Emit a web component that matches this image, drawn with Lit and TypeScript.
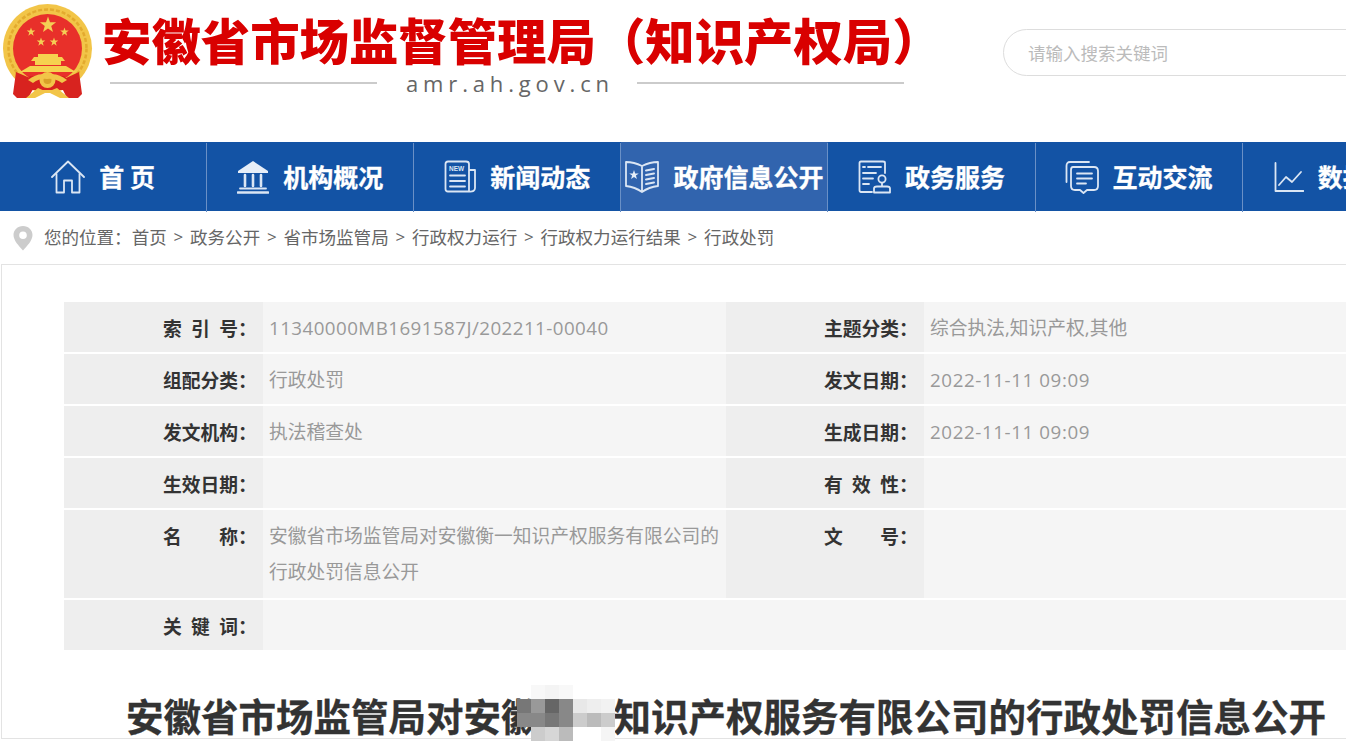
import { LitElement, html, css, svg } from "lit";
import { customElement } from "lit/decorators.js";

const star = (cx: number, cy: number, r: number) => {
  const pts: string[] = [];
  for (let i = 0; i < 10; i++) {
    const rad = i % 2 === 0 ? r : r * 0.4;
    const a = -Math.PI / 2 + (i * Math.PI) / 5;
    pts.push(`${(cx + rad * Math.cos(a)).toFixed(2)},${(cy + rad * Math.sin(a)).toFixed(2)}`);
  }
  return svg`<polygon points=${pts.join(" ")} />`;
};

const emblem = html`<svg class="emblem" width="96" height="100" viewBox="0 0 96 100">
  <circle cx="47.500" cy="46.500" r="44.500" fill="#f2c548"/>
  <circle cx="47.500" cy="46.500" r="39" fill="none" stroke="#e3aa2e" stroke-width="2.500" stroke-dasharray="4 2"/>
  <circle cx="47.500" cy="46.500" r="34.500" fill="#e8302a"/>
  <g fill="#f4cf55">${star(48, 23, 8.500)}${star(31, 30, 4.500)}${star(64.500, 30, 4.500)}${star(41, 40, 4.500)}${star(54, 40, 4.500)}</g>
  <g fill="#f6d24f">
    <rect x="38" y="52" width="20" height="3"/>
    <path d="M34 55 H62 L65 59 H31 Z"/>
    <rect x="35" y="59" width="26" height="4"/>
    <path d="M20 70 L30 64 H66 L76 70 Z"/>
  </g>
  <path d="M16 70 L13 92 L17 96 L28 96 L36 82 L30 76 Z M79 70 L82 92 L78 96 L67 96 L60 82 L66 76 Z" fill="#d8231f"/>
  <path d="M30 74 L64 74 L70 80 L64 88 L31 88 L25 80 Z" fill="#d8231f"/>
  <path d="M26 96 L38 86 L47 90 L57 86 L69 96 L60 96 L50 91 L45 91 L35 96 Z" fill="#f2c548"/>
  <circle cx="47.500" cy="78" r="8" fill="#f2c548"/>
  <circle cx="47.500" cy="78" r="4" fill="#d9a128"/>
  <path d="M28 78 Q38 70 47 73 Q57 70 67 78 L62 81 Q54 76 47 77 Q40 76 33 81 Z" fill="#f2c548"/>
</svg>`;

const icons: Record<string, unknown> = {
  home: html`<svg width="34" height="34" viewBox="0 0 34 34" class="ic">
    <path d="M1 17 L17 1.500 L33 17"/><path d="M5.500 14 V32.500 H13 V20.500 H21 V32.500 H28.500 V14"/></svg>`,
  bank: html`<svg width="32" height="34" viewBox="0 0 32 34" class="ic">
    <path class="f" d="M16 1 L31 11 V13 H1 V11 Z"/>
    <path d="M1 32.500 H31" stroke-width="2.600"/><path d="M3 28.500 H29"/>
    <path d="M8 15 V26 M16 15 V26 M24 15 V26" stroke-width="2.600"/></svg>`,
  news: html`<svg width="32" height="34" viewBox="0 0 32 34" class="ic">
    <path d="M25 31.500 H4 Q1.500 31.500 1.500 29 V4 Q1.500 1.500 4 1.500 H22 Q25 1.500 25 4 V31.500 Q31 32 31 28 V10 H25"/>
    <text x="5" y="11" class="tiny">NEW</text>
    <path d="M6 15.500 H21 M6 21 H21 M6 26.500 H21"/></svg>`,
  book: html`<svg width="34" height="34" viewBox="0 0 34 34" class="ic">
    <path d="M17 6 Q9 2 1 2 V26 Q10 27 17 32 Q24 27 33 26 V2 Q25 2 17 6 V32"/>
    <g class="f">${star(9, 15, 5)}</g>
    <path d="M21 10.500 L29 9 M21 15 L29 13.500 M21 19.500 L29 18 M21 24 L29 22.500" stroke-width="2"/></svg>`,
  serv: html`<svg width="33" height="34" viewBox="0 0 33 34" class="ic">
    <path d="M14 32 H3 Q1.500 32 1.500 30 V3 Q1.500 1.500 3 1.500 H25 Q27 1.500 27 3 V13"/>
    <path d="M5 7 H7 M10 7 H23 M5 13 H18 M5 18.500 H15 M5 24 H11"/>
    <circle cx="24" cy="19" r="3.600"/><path d="M24 23 V26 M16 32.500 V28.500 Q16 26.500 19 26.500 H29 Q32 26.500 32 28.500 V32.500 Z"/></svg>`,
  chat: html`<svg width="34" height="34" viewBox="0 0 34 34" class="ic">
    <path d="M24 2 H5 Q1.500 2 1.500 6 V22"/>
    <path d="M8 7 H29 Q33 7 33 11 V26 Q33 30 29 30 H22 L18.500 33 L15 30 H10 Q6 30 6 26 V10 Q6 7 8 7 Z"/>
    <path d="M12 13.500 H27 M12 18.500 H27 M12 23.500 H21"/></svg>`,
  chart: html`<svg width="30" height="34" viewBox="0 0 30 34" class="ic">
    <path d="M1.500 3 V31 H29.500"/><path d="M5 25 L12 17 L18 22 L27 12"/></svg>`,
};

const navs = [
  ["home", "首 页"],
  ["bank", "机构概况"],
  ["news", "新闻动态"],
  ["book", "政府信息公开", true],
  ["serv", "政务服务"],
  ["chat", "互动交流"],
  ["chart", "数据开放"],
] as [string, string, boolean?][];

const crumbs = ["首页", "政务公开", "省市场监管局", "行政权力运行", "行政权力运行结果", "行政处罚"];

const cells: [string, string, string?][] = [
  ["索 引 号", "11340000MB1691587J/202211-00040", "num"],
  ["主题分类", "综合执法,知识产权,其他"],
  ["组配分类", "行政处罚"],
  ["发文日期", "2022-11-11 09:09", "date"],
  ["发文机构", "执法稽查处"],
  ["生成日期", "2022-11-11 09:09", "date"],
  ["生效日期", ""],
  ["有 效 性", ""],
  ["名 称", "安徽省市场监管局对安徽衡一知识产权服务有限公司的行政处罚信息公开"],
  ["文 号", ""],
];

const mosaic: [number, number, string][] = [
  [0, 0, "#777"], [1, 0, "#999"], [2, 0, "#666"], [3, 0, "#888"], [4, 0, "#e8e8e8"], [5, 0, "#eee"], [6, 0, "#f2f2f2"],
  [0, 1, "#888"], [1, 1, "#888"], [2, 1, "#777"], [3, 1, "#888"], [4, 1, "#ccc"], [5, 1, "#bbb"], [6, 1, "#ccc"],
  [1, 2, "#ccc"], [2, 2, "#d6d6d6"], [3, 2, "#bbb"], [6, 2, "#f5f5f5"],
  [1, -1, "#f8f8f8"], [2, -1, "#f4f4f4"], [3, -1, "#f8f8f8"],
];

@customElement("app-root")
export class AppRoot extends LitElement {
  static styles = css`
    :host {
      display: block;
      width: 1346px;
      height: 755px;
      overflow: hidden;
      background: #fff;
      font-family: "Open Sans", "Noto Sans CJK SC", sans-serif;
    }
    .head {
      display: flex;
      height: 142px;
      width: 1346px;
    }
    .emblem { flex: none; margin-top: 2px; }
    .brand { flex: none; width: 815px; margin-left: 6px; display: flex; flex-direction: column; }
    .brand-title {
      font-family: "Noto Sans CJK SC", sans-serif;
      font-size: 49.4px;
      font-weight: 900;
      line-height: 60px;
      color: #d90000;
      margin-top: 9px;
      margin-bottom: 3px;
      white-space: nowrap;
    }
    .domain-row { display: flex; align-items: center; gap: 29px; margin-left: 8px; height: 22px; }
    .domain-row i { flex: none; width: 267px; height: 2px; background: #cbcbcb; }
    .domain {
      flex: none;
      font-family: "Open Sans", sans-serif;
      font-size: 22px;
      letter-spacing: 4.85px;
      margin-right: -6px;
      color: #666;
      line-height: 22px;
      white-space: nowrap;
    }
    .search {
      flex: none;
      box-sizing: border-box;
      width: 420px;
      height: 47px;
      margin: 29px 0 0 86px;
      border: 1px solid #ddd;
      border-radius: 24px;
      padding-left: 24px;
      font-size: 17.5px;
      line-height: 45px;
      color: #bbb;
      font-family: "Noto Sans CJK SC", sans-serif;
    }
    nav {
      display: flex;
      height: 69px;
      background: #1353a5;
      width: 1346px;
    }
    .item {
      flex: none;
      box-sizing: border-box;
      width: 207.12px;
      height: 69px;
      padding-right: 1px;
      display: flex;
      align-items: center;
      justify-content: center;
      gap: 14px;
      color: #fff;
      font-family: "Noto Sans CJK SC", sans-serif;
      font-size: 25px;
      font-weight: 700;
      -webkit-text-stroke: 0.3px #fff;
      white-space: nowrap;
      position: relative;
    }
    .item span { margin-top: -2px; }
    .item.on { background: #3164ae; }
    .item::after {
      content: "";
      position: absolute;
      right: 0;
      top: 1px;
      bottom: -1px;
      width: 1px;
      background: #6a90c6;
    }
    .ic { flex: none; fill: none; stroke: #dbe6f4; stroke-width: 1.8; stroke-linejoin: round; stroke-linecap: round; }
    .ic .f { fill: #e6eef8; stroke: none; }
    .tiny { font: 700 6.5px "Liberation Sans", sans-serif; fill: #dbe6f4; stroke: none; }
    .crumbs {
      height: 53px;
      display: flex;
      align-items: center;
      padding: 0 0 3px 13px;
      box-sizing: border-box;
      font-family: "Noto Sans CJK SC", sans-serif;
      font-size: 17.55px;
      color: #666;
      white-space: nowrap;
    }
    .crumbs svg { flex: none; margin: 3px 11px 0 0; }
    .crumbs .sep { margin: 0 6.8px; font-family: "Open Sans", sans-serif; font-size: 17px; }
    main {
      margin-left: 1px;
      border: 1px solid #e3e3e3;
      border-right: 0;
      padding: 37px 0 0 62px;
      width: 1400px;
      box-sizing: border-box;
    }
    .table {
      display: grid;
      width: 1324px;
      grid-template-columns: 199px 463px 198px 464px;
      grid-template-rows: 50px 50px 50px 50px 88px 50px;
      row-gap: 2px;
      font-size: 18.75px;
      line-height: 36px;
    }
    .k {
      background: #eee;
      color: #333;
      font-weight: 700;
      padding: 8px 0 0 99px;
      box-sizing: border-box;
      font-family: "Noto Sans CJK SC", sans-serif;
      display: flex;
    }
    .k.r { padding-left: 98px; }
    .k span { display: block; width: 75px; height: 36px; text-align: justify; text-align-last: justify; white-space: normal; }
    .v {
      background: #f5f5f5;
      color: #999;
      padding: 8px 0 0 6px;
      box-sizing: border-box;
    }
    .v.num { letter-spacing: 0.45px; }
    .v.date { letter-spacing: 0.6px; }
    .v.wide { grid-column: span 3; }
    h1 {
      margin: 42px 0 0 0;
      width: 1324px;
      text-align: center;
      font-family: "Noto Sans CJK SC", sans-serif;
      font-size: 37.5px;
      line-height: 46px;
      font-weight: 700;
      -webkit-text-stroke: 0.3px #333;
      color: #333;
      white-space: nowrap;
    }
    .blur { position: relative; }
    .blur svg { position: absolute; left: -21.5px; top: -2px; }
  `;

  render() {
    return html`
      <header class="head">
        ${emblem}
        <div class="brand">
          <div class="brand-title">安徽省市场监督管理局（知识产权局）</div>
          <div class="domain-row"><i></i><span class="domain">amr.ah.gov.cn</span><i></i></div>
        </div>
        <div class="search">请输入搜索关键词</div>
      </header>
      <nav>
        ${navs.map(
          ([ic, label, on]) => html`<div class="item ${on ? "on" : ""}">${icons[ic]}<span>${label}</span></div>`
        )}
      </nav>
      <div class="crumbs">
        <svg width="20" height="26" viewBox="0 0 20 26">
          <path fill-rule="evenodd" fill="#ccc" d="M10 1 C4.500 1 0.500 5 0.500 10 C0.500 15.500 6 21 10 25.500 C14 21 19.500 15.500 19.500 10 C19.500 5 15.500 1 10 1 Z M10 6.500 A3.800 3.800 0 1 1 10 14.100 A3.800 3.800 0 1 1 10 6.500 Z"/>
        </svg>
        <span>您的位置：</span>
        ${crumbs.map(
          (c, i) => html`${i ? html`<span class="sep">&gt;</span>` : ""}<span>${c}</span>`
        )}
      </div>
      <main>
        <div class="table">
          ${cells.map(
            ([k, v, cls], i) => html`<div class="k ${i % 2 ? "r" : ""}"><span>${k}</span>：</div><div class="v ${cls ?? ""}">${v}</div>`
          )}
          <div class="k"><span>关 键 词</span>：</div>
          <div class="v wide"></div>
        </div>
        <h1>安徽省市场监管局对安徽<span class="blur">衡一<svg width="98" height="58" viewBox="0 0 98 58">
          <path fill="#fff" d="M14 10 Q18 0 30 0 H62 Q90 2 98 28 V50 Q96 56 88 56 H24 Q16 54 14 42 Z"/>
          ${mosaic.map(([c, r, col]) => svg`<rect x=${c * 14} y=${r * 14 + 14} width="14" height="14" fill=${col} />`)}
        </svg></span>知识产权服务有限公司的行政处罚信息公开</h1>
      </main>
    `;
  }
}
